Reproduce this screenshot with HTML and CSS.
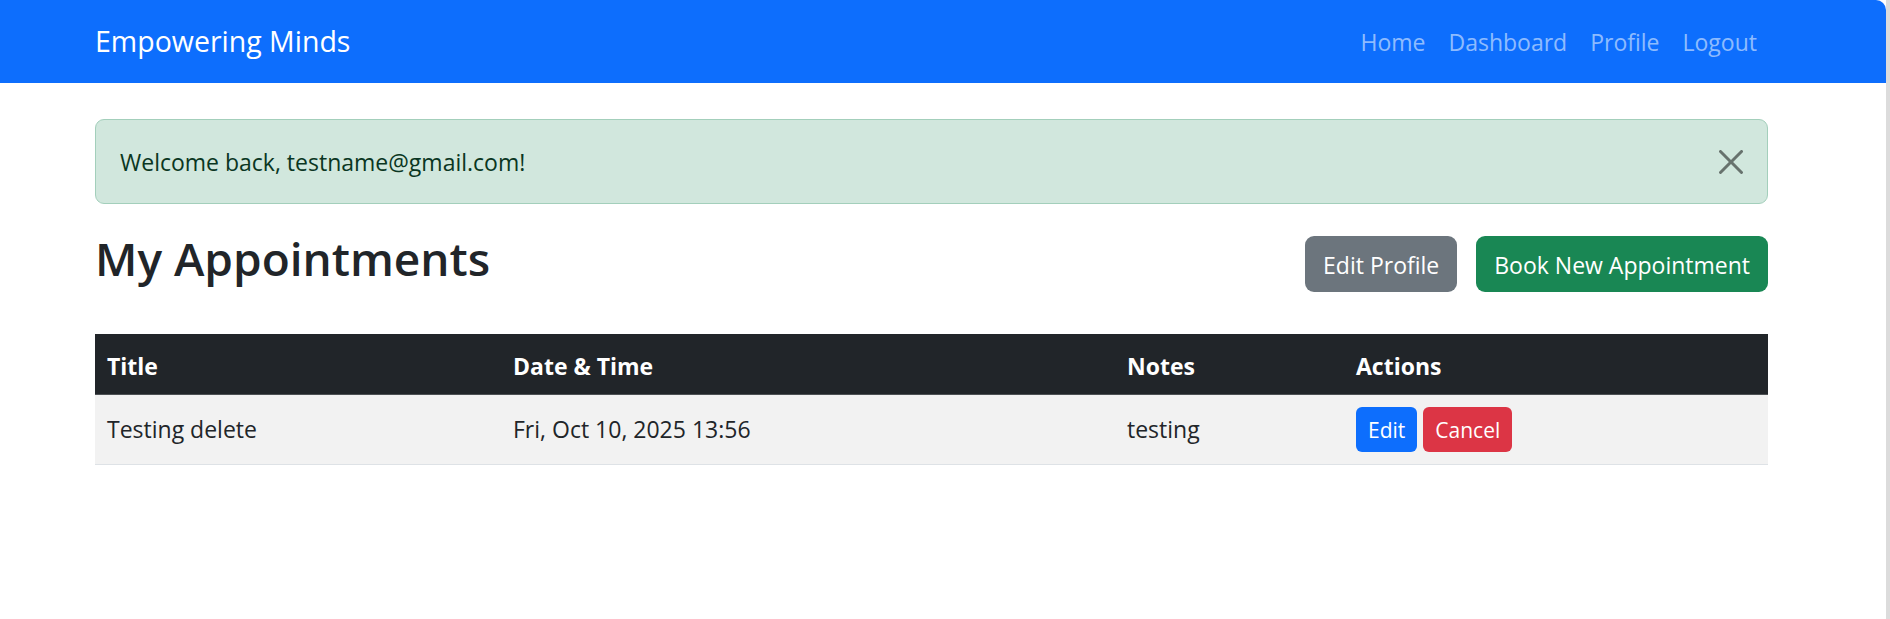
FILE: index.html
```html
<!DOCTYPE html>
<html lang="en">
<head>
<meta charset="utf-8">
<title>My Appointments - Empowering Minds</title>
<link rel="stylesheet" href="styles.css">
</head>
<body>
<div class="page">
  <nav class="navbar">
    <div class="wrap nav-inner">
      <a class="brand" href="#">Empowering Minds</a>
      <ul class="nav-links">
        <li><a href="#">Home</a></li>
        <li><a href="#">Dashboard</a></li>
        <li><a href="#">Profile</a></li>
        <li><a href="#">Logout</a></li>
      </ul>
    </div>
  </nav>

  <main class="wrap content">
    <div class="alert">
      <span>Welcome back, testname@gmail.com!</span>
      <button class="btn-close" type="button" aria-label="Close">
        <svg viewBox="0 0 16 16" width="24" height="24"><path d="M.293.293a1 1 0 0 1 1.414 0L8 6.586 14.293.293a1 1 0 1 1 1.414 1.414L9.414 8l6.293 6.293a1 1 0 0 1-1.414 1.414L8 9.414l-6.293 6.293a1 1 0 0 1-1.414-1.414L6.586 8 .293 1.707a1 1 0 0 1 0-1.414z"/></svg>
      </button>
    </div>

    <div class="heading-row">
      <h2 class="title">My Appointments</h2>
      <div class="head-actions">
        <a class="btn btn-secondary" href="#">Edit Profile</a>
        <a class="btn btn-success" href="#">Book New Appointment</a>
      </div>
    </div>

    <table class="table">
      <colgroup>
        <col class="c-title"><col class="c-date"><col class="c-notes"><col class="c-actions">
      </colgroup>
      <thead>
        <tr><th>Title</th><th>Date &amp; Time</th><th>Notes</th><th>Actions</th></tr>
      </thead>
      <tbody>
        <tr>
          <td>Testing delete</td>
          <td>Fri, Oct 10, 2025 13:56</td>
          <td>testing</td>
          <td class="row-actions">
            <a class="btn-sm btn-primary" href="#">Edit</a>
            <a class="btn-sm btn-danger" href="#">Cancel</a>
          </td>
        </tr>
      </tbody>
    </table>
  </main>
</div>
</body>
</html>
```

FILE: styles.css
```css
html, body {
  margin: 0;
  padding: 0;
}
body {
  background: #ffffff;
  border-right: 4px solid #dcdcdc;
  min-height: 619px;
  box-sizing: border-box;
  font-family: "Open Sans", "Noto Sans", sans-serif;
  font-size: 23px;
  line-height: 36px;
  color: #212529;
}
.page {
  background: #ffffff;
  min-height: 619px;
}
a { text-decoration: none; }

.wrap {
  width: 1673px;
  margin-left: 95px;
}

/* Navbar */
.navbar {
  background: #0d6efd;
  height: 83px;
  border-top-right-radius: 10px;
}
.nav-inner {
  height: 83px;
  display: flex;
  align-items: center;
  justify-content: space-between;
}
.brand {
  color: #ffffff;
  font-size: 28.5px;
  line-height: 45px;
  margin-top: -1px;
}
.nav-links {
  list-style: none;
  margin: 0;
  padding: 0;
  display: flex;
}
.nav-links a {
  display: block;
  padding: 0 11.5px;
  color: rgba(255, 255, 255, 0.55);
  line-height: 36px;
}
.nav-links li:last-child a { padding-right: 11px; }

/* Alert */
.content { padding-top: 36px; }
.alert {
  position: relative;
  box-sizing: border-box;
  height: 85px;
  padding: 24px 72px 24px 24px;
  background: #d1e7dd;
  border: 1.5px solid #a3cfbb;
  border-radius: 9px;
  color: #0a3622;
  margin-bottom: 24px;
}
.btn-close {
  position: absolute;
  top: 0;
  right: 0;
  padding: 30px 24px;
  border: 0;
  background: transparent;
  line-height: 0;
  opacity: 0.5;
  cursor: pointer;
}
.btn-close svg { display: block; fill: #000; }

/* Heading row */
.heading-row {
  display: flex;
  align-items: center;
  justify-content: space-between;
  margin-bottom: 36px;
}
.title {
  margin: 2px 0 10px 0;
  font-size: 46px;
  font-weight: 600;
  line-height: 57.6px;
}
.head-actions {
  display: flex;
  gap: 19px;
}
.btn {
  display: inline-block;
  box-sizing: border-box;
  height: 56px;
  padding: 11px 18px 7px;
  border-radius: 9px;
  color: #ffffff;
  line-height: 36px;
  margin-top: 2px;
}
.btn-secondary { background: #6c757d; }
.btn-success { background: #198754; }

/* Table */
.table {
  width: 1673px;
  border-collapse: collapse;
  table-layout: fixed;
}
.c-title { width: 406px; }
.c-date { width: 614px; }
.c-notes { width: 229px; }
.c-actions { width: 424px; }
.table th {
  background: #212529;
  color: #ffffff;
  font-weight: 700;
  text-align: left;
  padding: 14px 12px 10px;
  height: 36px;
  border-bottom: 1.5px solid #4d5154;
}
.table td {
  background: #f2f2f2;
  padding: 12px;
  border-bottom: 1.5px solid #dee2e6;
  vertical-align: middle;
}
.row-actions {
  display: flex;
  gap: 6px;
}
.btn-sm {
  display: inline-block;
  box-sizing: border-box;
  height: 45px;
  padding: 7px 12px 5px;
  border-radius: 6px;
  color: #ffffff;
  font-size: 21px;
  line-height: 33px;
}
.btn-primary { background: #0d6efd; }
.btn-danger { background: #dc3545; }
```
